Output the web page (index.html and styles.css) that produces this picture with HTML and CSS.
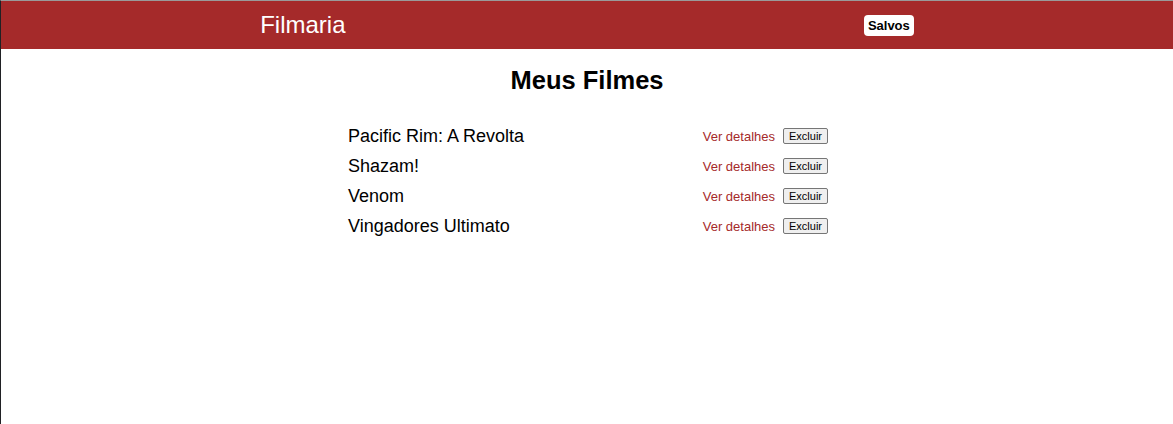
FILE: index.html
```html
<!DOCTYPE html>
<html lang="pt-BR">
<head>
<meta charset="utf-8">
<title>Filmaria</title>
<link rel="stylesheet" href="styles.css">
</head>
<body>
<header class="topbar">
  <a class="brand" href="#">Filmaria</a>
  <a class="saved" href="#">Salvos</a>
</header>
<main class="page">
  <h1 class="title">Meus Filmes</h1>
  <ul class="movies">
    <li class="movie"><span class="movie-name">Pacific Rim: A Revolta</span><div class="actions"><a class="details" href="#">Ver detalhes</a><button class="remove">Excluir</button></div></li>
    <li class="movie"><span class="movie-name">Shazam!</span><div class="actions"><a class="details" href="#">Ver detalhes</a><button class="remove">Excluir</button></div></li>
    <li class="movie"><span class="movie-name">Venom</span><div class="actions"><a class="details" href="#">Ver detalhes</a><button class="remove">Excluir</button></div></li>
    <li class="movie"><span class="movie-name">Vingadores Ultimato</span><div class="actions"><a class="details" href="#">Ver detalhes</a><button class="remove">Excluir</button></div></li>
  </ul>
</main>
</body>
</html>
```
FILE: styles.css
```css
html, body {
  margin: 0;
  padding: 0;
  height: 100%;
}
body {
  font-family: "Liberation Sans", Arial, sans-serif;
  background: #fff;
  color: #000;
  border-top: 1px solid #9a9a9a;
  border-left: 1px solid #202124;
  box-sizing: border-box;
}
.topbar {
  height: 48px;
  background: #a52a2a;
  display: flex;
  justify-content: space-around;
  align-items: center;
}
.brand {
  color: #fff;
  font-size: 24px;
  text-decoration: none;
}
.saved {
  background: #fff;
  color: #000;
  font-size: 13px;
  font-weight: bold;
  text-decoration: none;
  padding: 3px 4px;
  border-radius: 4px;
  line-height: 15px;
}
.title {
  text-align: center;
  font-size: 25.5px;
  font-weight: bold;
  margin: 16px 0 26px;
  line-height: 30px;
}
.movies {
  list-style: none;
  margin: 0 auto;
  padding: 0 0 0 2px;
  width: 482px;
  box-sizing: border-box;
}
.movie {
  display: flex;
  justify-content: space-between;
  align-items: center;
  height: 30px;
}
.movie-name {
  font-size: 18px;
}
.actions {
  display: flex;
  align-items: center;
}
.details {
  color: #a52a2a;
  font-size: 13px;
  text-decoration: none;
}
.remove {
  margin-left: 8px;
  font-family: "Liberation Sans", Arial, sans-serif;
  font-size: 11px;
  padding: 1px 5px;
  border: 1px solid #767676;
  border-radius: 2px;
  background: #efefef;
  color: #000;
  line-height: 12px;
}
```
